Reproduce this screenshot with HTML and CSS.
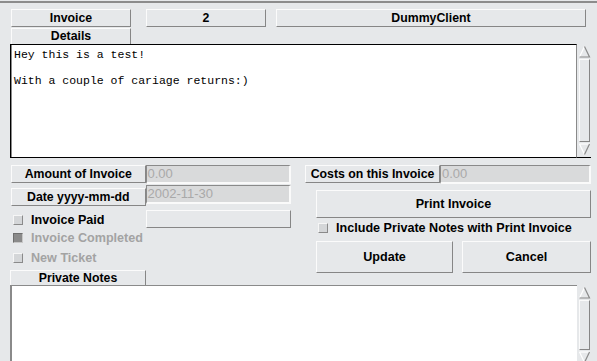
FILE: index.html
```html
<!DOCTYPE html>
<html lang="en">
<head>
    <meta charset="UTF-8">
    <title>Invoice</title>
    <link rel="stylesheet" href="styles.css">
</head>
<body>
    <div class="topline"></div>
    <div class="form">
        <div class="header-row">
            <div class="raised head-label">Invoice</div>
            <div class="raised head-num">2</div>
            <div class="raised head-client">DummyClient</div>
        </div>

        <div class="tab">Details</div>
        <div class="textbox focused">
            <div class="text">Hey this is a test!<br><br>With a couple of cariage returns:)</div>
            <div class="scrollbar">
                <svg class="arrow" width="13" height="13" viewBox="0 0 13 13">
                    <polyline points="1.5,12 6.5,1.5" stroke="#ffffff" stroke-width="1.2" fill="none"/>
                    <polyline points="6.5,1.5 11.5,12 1.5,12" stroke="#8a8a8a" stroke-width="1.2" fill="none"/>
                </svg>
                <div class="slider"></div>
                <svg class="arrow" width="13" height="13" viewBox="0 0 13 13">
                    <polyline points="1.5,1 11.5,1" stroke="#ffffff" stroke-width="1.2" fill="none"/>
                    <polyline points="1.5,1 6.5,11.5" stroke="#ffffff" stroke-width="1.2" fill="none"/>
                    <polyline points="6.5,11.5 11.5,1" stroke="#8a8a8a" stroke-width="1.2" fill="none"/>
                </svg>
            </div>
        </div>

        <div class="lower">
            <div class="left-col">
                <div class="field">
                    <div class="raised label">Amount of Invoice</div>
                    <div class="entry">0.00</div>
                </div>
                <div class="field date-field">
                    <div class="raised label">Date yyyy-mm-dd</div>
                    <div class="entry">2002-11-30</div>
                </div>
                <div class="field paid-field">
                    <div class="check-row">
                        <span class="checkbox"></span>
                        <span>Invoice Paid</span>
                    </div>
                    <div class="raised blank"></div>
                </div>
                <div class="check-row disabled">
                    <span class="checkbox checked"></span>
                    <span>Invoice Completed</span>
                </div>
                <div class="check-row disabled">
                    <span class="checkbox"></span>
                    <span>New Ticket</span>
                </div>
                <div class="tab notes-tab">Private Notes</div>
            </div>

            <div class="right-col">
                <div class="field">
                    <div class="raised label costs-label">Costs on this Invoice</div>
                    <div class="entry costs-entry">0.00</div>
                </div>
                <div class="raised button print">Print Invoice</div>
                <div class="check-row include">
                    <span class="checkbox"></span>
                    <span>Include Private Notes with Print Invoice</span>
                </div>
                <div class="button-row">
                    <div class="raised button update">Update</div>
                    <div class="raised button cancel">Cancel</div>
                </div>
            </div>
        </div>

        <div class="textbox notes">
            <div class="text"></div>
            <div class="scrollbar">
                <svg class="arrow" width="13" height="13" viewBox="0 0 13 13">
                    <polyline points="1.5,12 6.5,1.5" stroke="#ffffff" stroke-width="1.2" fill="none"/>
                    <polyline points="6.5,1.5 11.5,12 1.5,12" stroke="#8a8a8a" stroke-width="1.2" fill="none"/>
                </svg>
                <div class="slider"></div>
                <svg class="arrow" width="13" height="13" viewBox="0 0 13 13">
                    <polyline points="1.5,1 11.5,1" stroke="#ffffff" stroke-width="1.2" fill="none"/>
                    <polyline points="1.5,1 6.5,11.5" stroke="#ffffff" stroke-width="1.2" fill="none"/>
                    <polyline points="6.5,11.5 11.5,1" stroke="#8a8a8a" stroke-width="1.2" fill="none"/>
                </svg>
            </div>
        </div>
    </div>
</body>
</html>
```

FILE: styles.css
```css
* {
    margin: 0;
    padding: 0;
    box-sizing: border-box;
}

body {
    background: #e6e8ea;
    font-family: 'Liberation Sans', Arial, sans-serif;
    font-size: 12.3px;
    font-weight: bold;
    color: #000;
    overflow: hidden;
}

.topline {
    margin-top: 1px;
    height: 2px;
    background: #8c8c8c;
}

.form {
    padding: 6px 6px 0 10px;
}

/* tk style raised relief */
.raised {
    border: 1px solid;
    border-color: #fbfbfb #868686 #868686 #fbfbfb;
    display: flex;
    align-items: center;
    justify-content: center;
    line-height: 1;
}

.header-row {
    display: flex;
    height: 18px;
    margin-left: 1px;
}

.head-label,
.head-num {
    width: 120px;
}

.head-num {
    margin-left: 15px;
}

.head-client {
    width: 310px;
    margin-left: 10px;
}

.tab {
    width: 120px;
    height: 16px;
    margin: 1px 0 0 1px;
    border: 1px solid;
    border-color: #fbfbfb #868686 transparent #fbfbfb;
    border-bottom: none;
    text-align: center;
    line-height: 15px;
}

.textbox {
    display: flex;
    height: 114px;
    width: 581px;
}

.text {
    flex: 1;
    background: #fff;
    border: 1px solid;
    border-color: #8a8a8a #8a8a8a #000 #8a8a8a;
    font-family: 'Liberation Mono', 'Courier New', monospace;
    font-weight: normal;
    font-size: 11.5px;
    line-height: 13px;
    padding: 3px 3px;
}

.focused .text {
    border-color: #000 #8a8a8a #000 #000;
    box-shadow: inset 1px 0 0 #8a8a8a;
}

.scrollbar {
    width: 14px;
    display: flex;
    flex-direction: column;
    align-items: center;
    padding: 1px 0 1px 0;
    border-bottom: 1px solid #000;
}

.notes .scrollbar {
    border-bottom: none;
}

.arrow {
    display: block;
    flex: none;
}

.slider {
    flex: 1;
    width: 11px;
    margin: 1px 0;
    border: 1px solid;
    border-color: #fbfbfb #868686 #868686 #fbfbfb;
}

.lower {
    display: flex;
    margin-top: 7px;
}

.left-col {
    width: 281px;
    display: flex;
    flex-direction: column;
}

.right-col {
    width: 287px;
    margin-left: 14px;
    display: flex;
    flex-direction: column;
}

.field {
    display: flex;
    height: 18px;
}

.field .label {
    width: 135px;
    margin-left: 1px;
}

.entry {
    width: 146px;
    height: 19px;
    background: #d9dadb;
    border: 1px solid;
    border-width: 1px 2px 2px 1px;
    border-color: #8a8a8a #fafafa #fafafa #8a8a8a;
    color: #a9a9a9;
    font-weight: normal;
    font-size: 13px;
    line-height: 16px;
    padding-left: 1px;
}

.date-field {
    margin-top: 2px;
    height: 22px;
}

.date-field .label {
    margin-top: 3px;
    height: 18px;
}

.paid-field {
    margin-top: 3px;
    height: 18px;
}

.paid-field .check-row {
    width: 136px;
    height: 18px;
    padding-top: 1px;
}

.blank {
    width: 146px;
}

.check-row {
    display: flex;
    align-items: center;
    height: 20px;
    padding-left: 3px;
    font-size: 12.6px;
}

.check-row.disabled {
    color: #a3a3a3;
}

.checkbox {
    width: 10px;
    height: 10px;
    margin-right: 8px;
    background: #d4d6d8;
    border: 1px solid;
    border-color: #f6f6f6 #8a8a8a #8a8a8a #f6f6f6;
}

.checkbox.checked {
    background: #8a8a8a;
    border-color: #6e6e6e #c8c8c8 #c8c8c8 #6e6e6e;
}

.notes-tab {
    width: 136px;
    margin: 2px 0 0 0;
    height: 15px;
}

.costs-label {
    width: 136px;
}

.costs-label.label {
    margin-left: 0;
}

.costs-entry {
    width: 151px;
}

.button {
    font-size: 12.6px;
}

.print {
    height: 28px;
    margin: 7px 0 0 11px;
}

.include {
    margin: 0 0 0 10px;
    height: 20px;
}

.button-row {
    display: flex;
    margin: 3px 0 0 11px;
    gap: 9px;
}

.update {
    width: 137px;
    height: 32px;
}

.cancel {
    width: 129px;
    height: 32px;
}

.notes {
    height: 80px;
}

.notes .text {
    border-color: #8a8a8a;
    border-width: 1px 0 0 2px;
}
```
